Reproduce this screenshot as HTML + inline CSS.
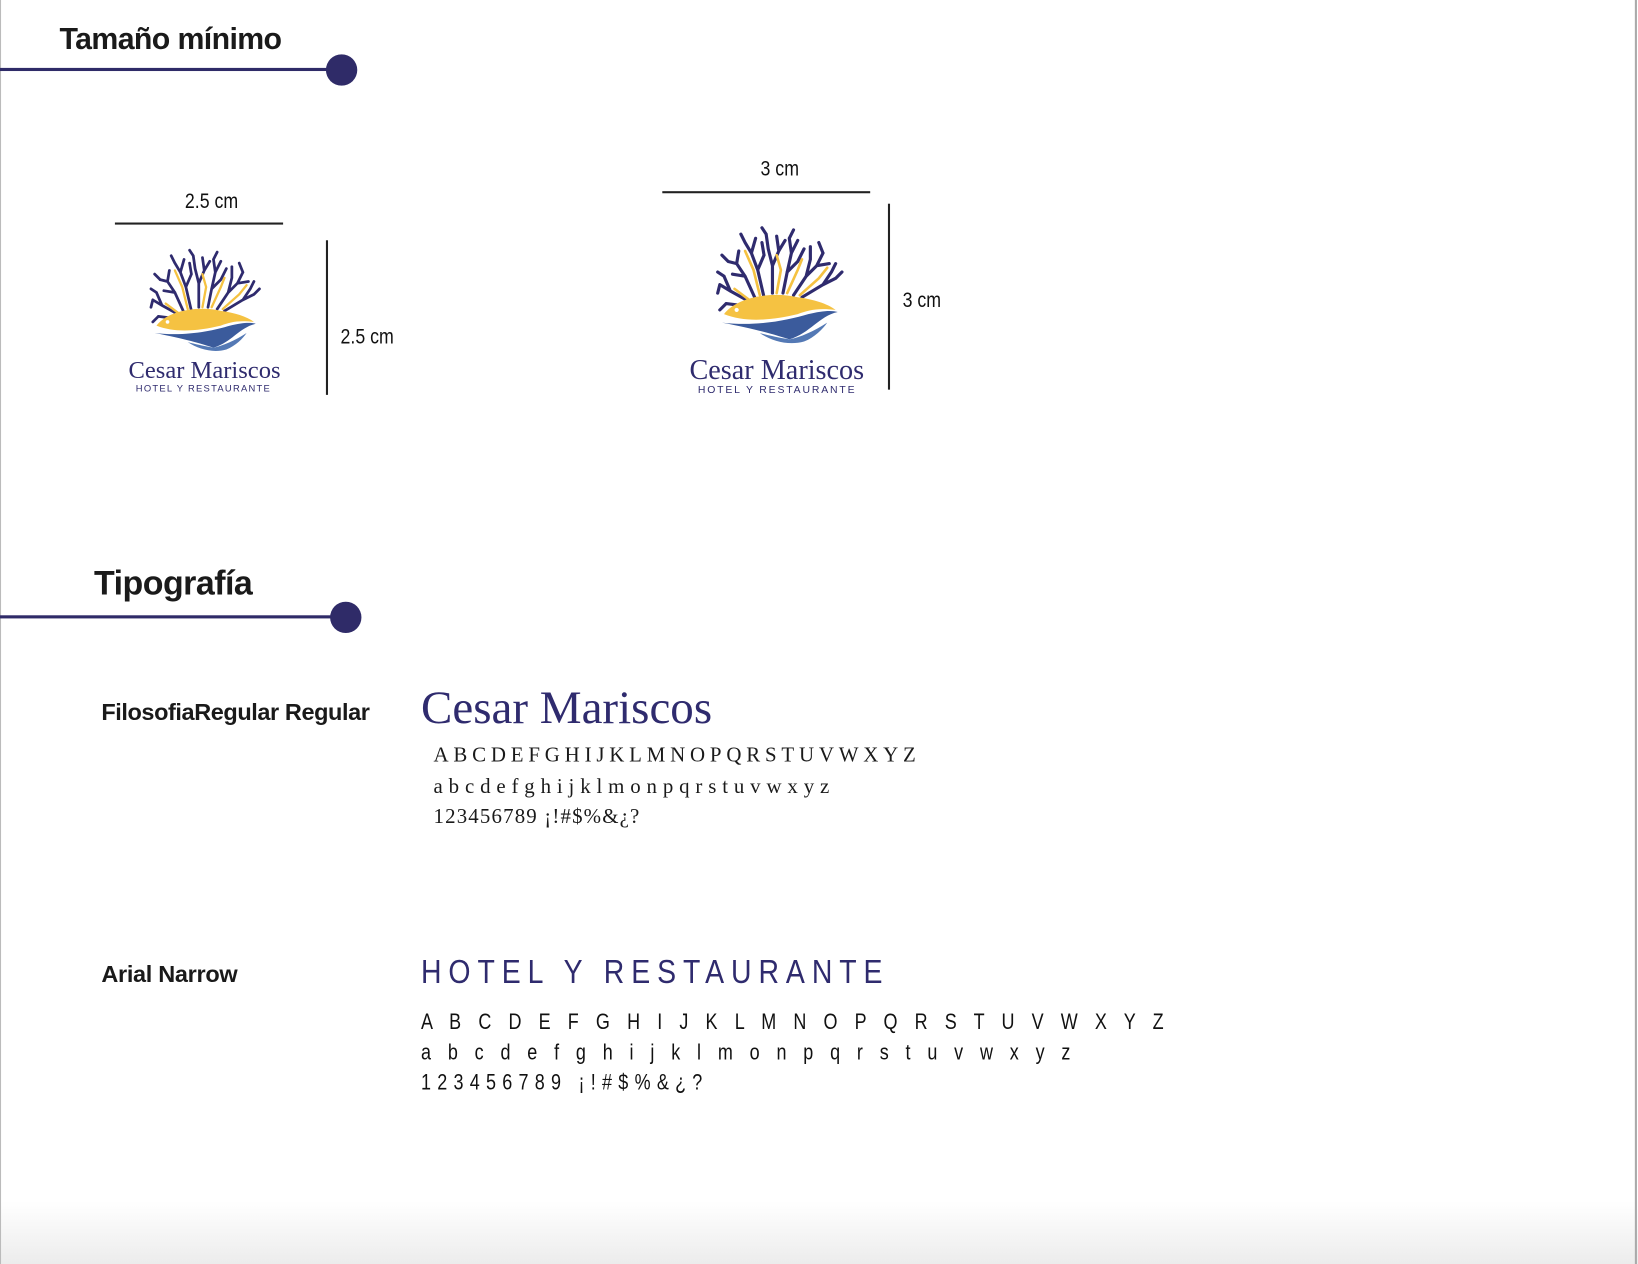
<!DOCTYPE html>
<html><head><meta charset="utf-8">
<style>
html,body{margin:0;padding:0;background:#fff;}
body{width:1638px;height:1264px;overflow:hidden;position:relative;}
#w{position:absolute;left:0;top:0;width:1568px;height:1210px;transform:scale(1.04464);transform-origin:0 0;
background:linear-gradient(to bottom,#fff 0,#fff 1150px,#ececec 1210px);}
.a{position:absolute;white-space:nowrap;line-height:1;}
.h{font-family:"Liberation Sans",sans-serif;font-weight:bold;color:#1a1a1a;}
.n{font-family:"Liberation Sans",sans-serif;color:#111;transform-origin:0 0;}
.s{font-family:"Liberation Serif",serif;}
.line{position:absolute;background:#2f2b68;}
.dot{position:absolute;border-radius:50%;background:#2f2b68;}
.k{position:absolute;background:#222;}
</style></head><body>
<div id="w">
<div style="position:absolute;left:0;top:0;width:1px;height:1210px;background:#bbb"></div>
<div style="position:absolute;left:1565px;top:0;width:2px;height:1210px;background:#aaa"></div>

<div class="a h" style="left:57px;top:24px;font-size:29px;letter-spacing:-0.6px">Tamaño mínimo</div>
<div class="line" style="left:0;top:65px;width:320px;height:3px"></div>
<div class="dot" style="left:312px;top:52px;width:30px;height:30px"></div>

<svg width="0" height="0" style="position:absolute">
<defs>
<g id="logo">
<g fill="none" stroke="#2f2b6e" stroke-width="3" stroke-linecap="round">
<path d="M40 72 L30 50 L22 38 M30 50 L18 48 M22 38 L14 36 M22 38 L24 26 M14 36 L8 30"/>
<path d="M48 70 L42 44 L36 28 M42 44 L48 30 M36 28 L30 18 M36 28 L40 14 M48 30 L46 18 M30 18 L26 10"/>
<path d="M56 66 L56 40 L52 24 M56 40 L62 26 M52 24 L50 10 M62 26 L60 12 M62 26 L68 16 M50 10 L46 4"/>
<path d="M66 66 L70 46 L74 28 M70 46 L80 36 M74 28 L72 14 M74 28 L80 16 M80 36 L86 24 M72 14 L76 6"/>
<path d="M76 68 L88 50 L98 40 M88 50 L92 34 M98 40 L104 28 M98 40 L110 38 M92 34 L92 22 M104 28 L100 18"/>
<path d="M84 70 L104 58 L116 52 M104 58 L112 46 M116 52 L122 46 M112 46 L116 38"/>
<path d="M34 74 L16 64 L6 58 M16 64 L10 50 M6 58 L4 66 M10 50 L4 46"/>
<path d="M28 78 L12 76 M12 76 L6 82"/>
</g>
<g fill="none" stroke="#f5c242" stroke-width="2.5" stroke-linecap="round">
<path d="M44 68 L38 44 L30 26"/>
<path d="M60 66 L64 44 L60 30"/>
<path d="M70 66 L80 44 L84 34"/>
<path d="M82 68 L100 52 L108 42"/>
<path d="M36 74 L20 62"/>
</g>
<path d="M10 86 C22 70 55 64 80 70 C95 72 108 76 116 82 C100 80 90 82 80 86 C55 92 30 94 10 86Z" fill="#f5c242"/>
<circle cx="22" cy="82" r="2" fill="#fff"/>
<path d="M8 94 C40 98 70 92 90 86 C102 83 112 82 118 84 C100 88 92 104 72 110 C60 106 40 100 8 94Z" fill="#3b5b9c"/>
<path d="M44 104 C56 112 72 116 86 112 C96 108 104 100 108 94 C96 102 82 108 72 110 C60 108 52 106 44 104Z" fill="#5479b5"/>
</g>
</defs>
</svg>

<!-- small logo -->
<div class="a n" style="left:177px;top:183px;font-size:20px;transform:scaleX(0.85)">2.5 cm</div>
<div class="k" style="left:110px;top:213px;width:161px;height:2px"></div>
<div class="k" style="left:312px;top:230px;width:2px;height:148px"></div>
<div class="a n" style="left:326px;top:313px;font-size:20px;transform:scaleX(0.85)">2.5 cm</div>
<svg class="a" style="left:141px;top:236px" width="110" height="103" viewBox="0 0 125 117"><use href="#logo"/></svg>
<div class="a s" style="left:123px;top:344px;font-size:23.5px;color:#2f2b6e">Cesar Mariscos</div>
<div class="a n" style="left:130px;top:368px;font-size:9px;letter-spacing:1.2px;color:#2f2b6e;transform:none">HOTEL Y RESTAURANTE</div>

<!-- large logo -->
<div class="a n" style="left:728px;top:152px;font-size:20px;transform:scaleX(0.85)">3 cm</div>
<div class="k" style="left:634px;top:183px;width:199px;height:2px"></div>
<div class="k" style="left:850px;top:195px;width:2px;height:178px"></div>
<div class="a n" style="left:864px;top:278px;font-size:20px;transform:scaleX(0.85)">3 cm</div>
<svg class="a" style="left:683px;top:214px" width="126" height="118" viewBox="0 0 125 117"><use href="#logo"/></svg>
<div class="a s" style="left:660px;top:341px;font-size:27px;color:#2f2b6e">Cesar Mariscos</div>
<div class="a n" style="left:668px;top:369px;font-size:10px;letter-spacing:1.75px;color:#2f2b6e;transform:none">HOTEL Y RESTAURANTE</div>

<div class="a h" style="left:90px;top:542px;font-size:32.5px;letter-spacing:-0.5px">Tipografía</div>
<div class="line" style="left:0;top:589px;width:325px;height:3px"></div>
<div class="dot" style="left:316px;top:576px;width:30px;height:30px"></div>

<div class="a h" style="left:97px;top:671px;font-size:22.5px;letter-spacing:-0.4px">FilosofiaRegular Regular</div>
<div class="a s" style="left:403px;top:655px;font-size:45px;color:#2f2b6e">Cesar Mariscos</div>
<div class="a s" style="left:415px;top:713px;font-size:20px;letter-spacing:4.6px;color:#1a1a1a">ABCDEFGHIJKLMNOPQRSTUVWXYZ</div>
<div class="a s" style="left:415px;top:743px;font-size:20px;letter-spacing:5.6px;color:#1a1a1a">abcdefghijklmonpqrstuvwxyz</div>
<div class="a s" style="left:415px;top:772px;font-size:20px;letter-spacing:1.1px;color:#1a1a1a">123456789 ¡!#$%&amp;¿?</div>

<div class="a h" style="left:97px;top:922px;font-size:22.5px;letter-spacing:-0.3px">Arial Narrow</div>
<div class="a n" style="left:403px;top:914px;font-size:32px;letter-spacing:7.8px;color:#2f2b6e;transform:scaleX(0.85)">HOTEL Y RESTAURANTE</div>
<div class="a n" style="left:403px;top:968px;font-size:21px;letter-spacing:7.1px;transform:scaleX(0.82)">A B C D E F G H I J K L M N O P Q R S T U V W X Y Z</div>
<div class="a n" style="left:403px;top:997px;font-size:21px;letter-spacing:6.9px;transform:scaleX(0.82)">a b c d e f g h i j k l m o n p q r s t u v w x y z</div>
<div class="a n" style="left:403px;top:1026px;font-size:21px;letter-spacing:7.3px;transform:scaleX(0.82)">123456789 ¡!#$%&amp;¿?</div>
</div>
</body></html>
